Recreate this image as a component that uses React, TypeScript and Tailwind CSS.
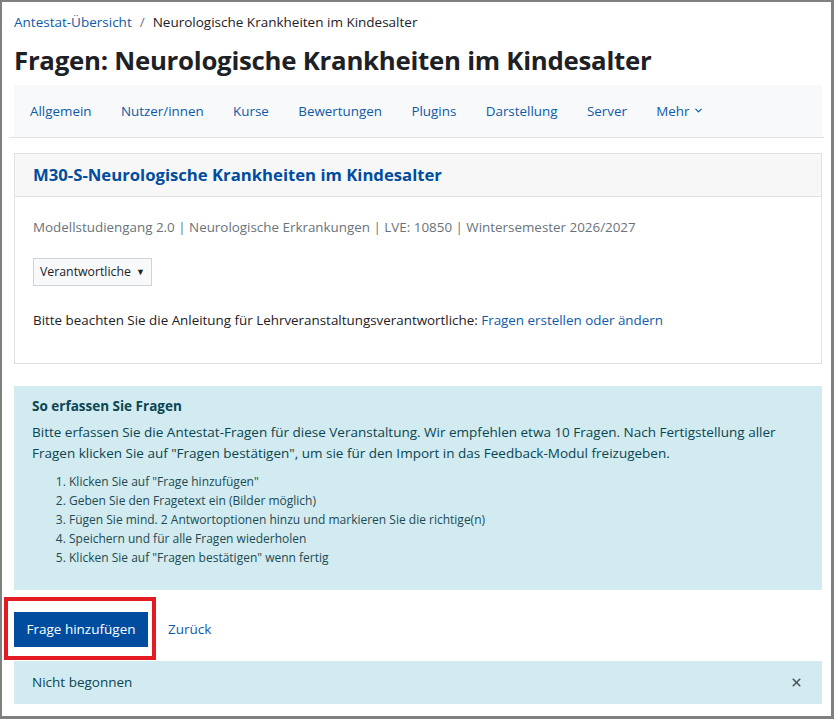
import React from "react";
import { ChevronDown, X } from "lucide-react";

const navItems = ["Allgemein", "Nutzer/innen", "Kurse", "Bewertungen", "Plugins", "Darstellung", "Server"];

const steps = [
  'Klicken Sie auf "Frage hinzufügen"',
  "Geben Sie den Fragetext ein (Bilder möglich)",
  "Fügen Sie mind. 2 Antwortoptionen hinzu und markieren Sie die richtige(n)",
  "Speichern und für alle Fragen wiederholen",
  'Klicken Sie auf "Fragen bestätigen" wenn fertig',
];

export default function App() {
  return (
    <div
      className="w-[834px] h-[719px] overflow-hidden bg-white border-[#808080] border-l-2 border-t-2 border-r-[3px] border-b-[3px] text-[#1d2125]"
      style={{ fontFamily: '"Open Sans", "Noto Sans", sans-serif' }}
    >
      <div className="pl-3 pr-[9px]">
        {/* breadcrumb */}
        <div className="pt-[9px] h-[30px] flex items-center gap-2 text-[13.5px] leading-5">
          <a className="text-[#0f5aa8]">Antestat-Übersicht</a>
          <span className="text-[#6a737b]">/</span>
          <span>Neurologische Krankheiten im Kindesalter</span>
        </div>

        <h1 className="mt-[10px] h-[38px] flex items-center text-[25.8px] font-bold tracking-[-0.01em] leading-none">
          Fragen: Neurologische Krankheiten im Kindesalter
        </h1>

        {/* secondary navigation */}
        <div className="mt-[5px] -ml-[5px] -mr-[2px] pl-[5px] pr-[2px] border-b border-[#dee2e6]">
          <nav className="h-[52px] bg-[#f8f9fa] flex items-center pl-[16px] gap-[29.4px] text-[13.4px]">
            {navItems.map((item) => (
              <a key={item} className="text-[#0f5aa8]">
                {item}
              </a>
            ))}
            <a className="text-[#0f5aa8] flex items-center gap-[3px]">
              Mehr
              <ChevronDown className="w-[11px] h-[11px]" strokeWidth={2.5} />
            </a>
          </nav>
        </div>

        {/* course card */}
        <div className="mt-[15px] border border-[#dee2e6]">
          <div className="h-[43px] bg-[#f7f7f7] border-b border-[#dee2e6] flex items-center px-[18px]">
            <h2 className="text-[16.7px] font-bold text-[#004d9f] leading-none">
              M30-S-Neurologische Krankheiten im Kindesalter
            </h2>
          </div>
          <div className="px-[18px] pt-[20px] pb-[33px] text-[13.4px]">
            <p className="h-[20px] leading-5 text-[#6a737b]">
              Modellstudiengang 2.0 | Neurologische Erkrankungen | LVE: 10850 | Wintersemester 2026/2027
            </p>
            <button className="mt-[21px] h-[28px] px-[6px] border border-[#ced4da] bg-[#f8f9fa] text-[12.3px] flex items-center gap-[5px]">
              Verantwortliche
              <span className="text-[9px]">▼</span>
            </button>
            <p className="mt-[24px] h-[20px] leading-5">
              Bitte beachten Sie die Anleitung für Lehrveranstaltungsverantwortliche:{" "}
              <a className="text-[#0f5aa8]">Fragen erstellen oder ändern</a>
            </p>
          </div>
        </div>

        {/* instructions */}
        <div className="mt-[22px] h-[204px] bg-[#d1ebf0] px-[18px] pt-[10px] text-[#0b4551]">
          <h3 className="h-[20px] leading-5 font-bold text-[13.5px]">So erfassen Sie Fragen</h3>
          <p className="mt-[6px] leading-[21px] text-[13.5px]">
            Bitte erfassen Sie die Antestat-Fragen für diese Veranstaltung. Wir empfehlen etwa 10 Fragen. Nach
            Fertigstellung aller Fragen klicken Sie auf "Fragen bestätigen", um sie für den Import in das
            Feedback-Modul freizugeben.
          </p>
          <ol className="mt-[8px] list-decimal pl-[37px] text-[12px] leading-[19px] text-[#1d4a52]">
            {steps.map((s) => (
              <li key={s}>{s}</li>
            ))}
          </ol>
        </div>

        {/* actions */}
        <div className="mt-[22px] h-[35px] flex items-center gap-5">
          <div className="relative">
            <button className="h-[35px] w-[134px] bg-[#004d9f] text-white text-[13.5px]">Frage hinzufügen</button>
            <div className="absolute -left-[10px] -top-[15px] w-[152px] h-[63px] border-4 border-[#e31c23] pointer-events-none" />
          </div>
          <a className="text-[#0f5aa8] text-[13.5px]">Zurück</a>
        </div>

        {/* status alert */}
        <div className="mt-[14px] h-[43px] bg-[#d1ebf0] flex items-center justify-between pl-[18px] pr-[19px] text-[13.5px] text-[#0b4551]">
          <span>Nicht begonnen</span>
          <X className="w-[13px] h-[13px] text-[#4b5459]" strokeWidth={3} />
        </div>
      </div>
    </div>
  );
}
